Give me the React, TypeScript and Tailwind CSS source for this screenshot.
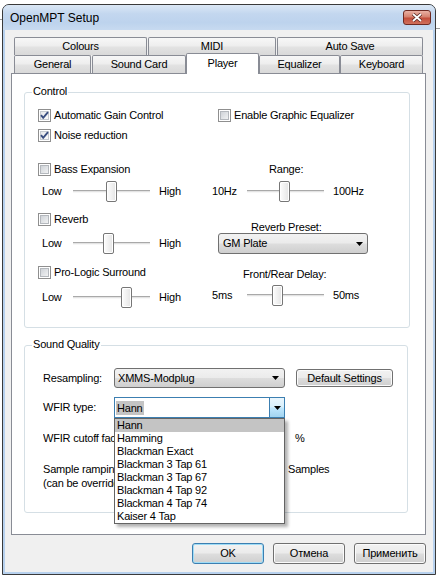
import React from "react";

const BTN_BG =
  "bg-[linear-gradient(to_bottom,#f2f2f2_0%,#ebebeb_48%,#dddddd_52%,#cfcfcf_100%)]";
const TAB_BG =
  "bg-[linear-gradient(to_bottom,#f7f7f7_0%,#eeeeee_45%,#e2e2e2_55%,#d9d9d9_100%)]";

const WFIR_TYPES = [
  "Hann",
  "Hamming",
  "Blackman Exact",
  "Blackman 3 Tap 61",
  "Blackman 3 Tap 67",
  "Blackman 4 Tap 92",
  "Blackman 4 Tap 74",
  "Kaiser 4 Tap",
];

function Arrow() {
  return (
    <svg width="7" height="4" viewBox="0 0 7 4">
      <path d="M0 0h7L3.5 4z" fill="#000" />
    </svg>
  );
}

function Tab({ label, className }: { label: string; className: string }) {
  return (
    <div
      className={`flex h-[18px] items-center justify-center rounded-t-[2px] border border-b-0 border-[#898c95] ${TAB_BG} ${className}`}
    >
      {label}
    </div>
  );
}

function CheckBox({
  label,
  checked = false,
  className = "",
}: {
  label: string;
  checked?: boolean;
  className?: string;
}) {
  return (
    <div className={`flex h-[13px] items-center ${className}`}>
      <span className="relative h-[13px] w-[13px] shrink-0 border border-[#8f8f8f] bg-white p-[1px]">
        <span
          className={
            checked
              ? "block h-full w-full border border-[#c5cad0] bg-[linear-gradient(135deg,#e4e7ea,#fbfbfb)]"
              : "block h-full w-full border border-[#b4b8bd] bg-[linear-gradient(135deg,#cfd3d8,#f1f2f3)]"
          }
        />
        {checked ? (
          <svg
            viewBox="0 0 11 11"
            className="absolute left-0 top-0 h-[11px] w-[11px]"
          >
            <path
              d="M2 5.2l2.2 2.6L9 2.2"
              fill="none"
              stroke="#394e80"
              strokeWidth="1.9"
            />
          </svg>
        ) : null}
      </span>
      <span className="ml-[3px] whitespace-nowrap leading-[13px]">{label}</span>
    </div>
  );
}

function Slider({
  lo,
  hi,
  loWidth,
  thumb,
  className = "",
}: {
  lo: string;
  hi: string;
  loWidth: string;
  thumb: string;
  className?: string;
}) {
  return (
    <div className={`flex h-[21px] items-center ${className}`}>
      <span className={loWidth}>{lo}</span>
      <div className="relative h-[21px] w-[77px]">
        <div className="absolute inset-x-0 top-[9px] h-[3px] border-t border-b border-t-[#a9a9a9] border-b-[#f7f7f7] bg-[#e3e3e3]" />
        <div
          className={`absolute top-0 h-[21px] w-[11px] rounded-[2px] border border-[#767676] bg-[linear-gradient(to_right,#fdfdfd,#e4e4e4)] shadow-[inset_0_0_0_1px_#ffffff] ${thumb}`}
        />
      </div>
      <span className="ml-[9px]">{hi}</span>
    </div>
  );
}

function Combo({ text, className }: { text: string; className: string }) {
  return (
    <div
      className={`flex items-center justify-between rounded-[3px] border border-[#707070] ${BTN_BG} ${className}`}
    >
      <span className="whitespace-nowrap">{text}</span>
      <Arrow />
    </div>
  );
}

function Button({ label, focused = false }: { label: string; focused?: boolean }) {
  return (
    <div
      className={
        focused
          ? `flex h-[21px] w-[72px] items-center justify-center rounded-[3px] border border-[#3c7fb1] shadow-[inset_0_0_0_1px_#9fdcf6] ${BTN_BG}`
          : `flex h-[21px] w-[72px] items-center justify-center rounded-[3px] border border-[#707070] shadow-[inset_0_0_0_1px_#fbfbfb] ${BTN_BG}`
      }
    >
      {label}
    </div>
  );
}

export default function App() {
  return (
    <div className="relative h-[578px] w-[440px] overflow-hidden bg-white pl-[2px] pt-[4px] font-['Liberation_Sans',Arial,sans-serif] text-[11px] tracking-[-0.2px] text-black">
      {/* bits of the window behind */}
      <div className="absolute left-0 top-[19px] h-px w-[3px] bg-[#9a9a9a]" />
      <div className="absolute right-0 top-[28px] h-px w-[5px] bg-[#9a9a9a]" />

      <div className="relative flex h-[571px] w-[434px] flex-col rounded-t-[7px] border border-[#3a3a3a] bg-[#b7d1ee]">
        {/* title bar */}
        <div className="flex h-[25px] items-center justify-between rounded-t-[6px] bg-[linear-gradient(to_bottom,#dbe7f5_0%,#c3d7ef_35%,#bdd3ed_70%,#c7daf0_100%)] pl-[7px] pr-[4px]">
          <span className="text-[12px] tracking-normal">OpenMPT Setup</span>
          <div className="flex h-[15px] w-[28px] items-center justify-center rounded-[3px] border border-[#6e2a22] bg-[linear-gradient(to_bottom,#eab1a4_0%,#d6826f_45%,#c34e3b_55%,#d0705c_100%)]">
            <svg width="12" height="9" viewBox="0 0 12 9">
              <path d="M2 1l8 7M10 1L2 8" stroke="#5a2a25" strokeWidth="3.4" />
              <path d="M2 1l8 7M10 1L2 8" stroke="#ffffff" strokeWidth="1.8" />
            </svg>
          </div>
        </div>

        {/* client area */}
        <div className="mx-[2px] mb-[2px] flex-1 bg-[#f0f0f0] pt-[7px]">
          <div className="ml-[6px] w-[415px]">
            <div className="flex h-[18px] pl-[3px]">
              <Tab label="Colours" className="w-[133px]" />
              <Tab label="MIDI" className="ml-[1px] w-[128px]" />
              <Tab label="Auto Save" className="ml-[1px] w-[146px]" />
            </div>
            <div className="flex h-[18px] items-end pl-[3px]">
              <Tab label="General" className="w-[77px]" />
              <Tab label="Sound Card" className="ml-[1px] w-[94px]" />
              <div className="relative z-10 -mb-px flex h-[21px] w-[73px] items-center justify-center rounded-t-[2px] border border-b-0 border-[#898c95] bg-white pb-[1px]">
                Player
              </div>
              <Tab label="Equalizer" className="w-[81px]" />
              <Tab label="Keyboard" className="w-[83px]" />
            </div>

            {/* page */}
            <div className="h-[462px] border border-[#898c95] bg-white pl-[12px] pt-[18px]">
              {/* Control */}
              <div className="relative h-[236px] w-[386px] rounded-[3px] border border-[#d5dfe5]">
                <span className="absolute -top-[8px] left-[7px] bg-white px-[1px] leading-[13px]">
                  Control
                </span>
                <div className="flex">
                  <div className="ml-[13px] flex w-[174px] flex-col">
                    <CheckBox className="mt-[16px]" checked label="Automatic Gain Control" />
                    <CheckBox className="mt-[7px]" checked label="Noise reduction" />
                    <CheckBox className="mt-[21px]" label="Bass Expansion" />
                    <Slider className="ml-[4px] mt-[5px]" lo="Low" hi="High" loWidth="w-[31px]" thumb="left-[33px]" />
                    <CheckBox className="mt-[11px]" label="Reverb" />
                    <Slider className="ml-[4px] mt-[7px]" lo="Low" hi="High" loWidth="w-[31px]" thumb="left-[30px]" />
                    <CheckBox className="mt-[12px]" label="Pro-Logic Surround" />
                    <Slider className="ml-[4px] mt-[8px]" lo="Low" hi="High" loWidth="w-[31px]" thumb="left-[48px]" />
                  </div>
                  <div className="flex flex-col">
                    <CheckBox className="ml-[6px] mt-[16px]" label="Enable Graphic Equalizer" />
                    <span className="ml-[57px] mt-[41px] leading-[13px]">Range:</span>
                    <Slider className="mt-[5px]" lo="10Hz" hi="100Hz" loWidth="w-[35px]" thumb="left-[32px]" />
                    <span className="ml-[39px] mt-[20px] h-[11px] leading-[11px]">Reverb Preset:</span>
                    <Combo text="GM Plate" className="ml-[6px] h-[21px] w-[150px] pl-[4px] pr-[4px]" />
                    <span className="ml-[31px] mt-[15px] h-[11px] leading-[11px]">Front/Rear Delay:</span>
                    <Slider className="mt-[5px]" lo="5ms" hi="50ms" loWidth="w-[35px]" thumb="left-[25px]" />
                  </div>
                </div>
              </div>

              {/* Sound Quality */}
              <div className="relative mt-[17px] h-[168px] w-[384px] rounded-[3px] border border-[#d5dfe5] pl-[18px]">
                <span className="absolute -top-[8px] left-[7px] bg-white px-[1px] leading-[13px]">
                  Sound Quality
                </span>

                <div className="mt-[22px] flex h-[20px] items-center">
                  <span className="w-[71px]">Resampling:</span>
                  <Combo text="XMMS-Modplug" className="h-[20px] w-[171px] pl-[3px] pr-[5px]" />
                  <div
                    className={`ml-[11px] flex h-[18px] w-[97px] items-center justify-center rounded-[3px] border border-[#707070] shadow-[inset_0_0_0_1px_#fbfbfb] ${BTN_BG}`}
                  >
                    Default Settings
                  </div>
                </div>

                <div className="mt-[9px] flex h-[21px] items-center">
                  <span className="w-[71px]">WFIR type:</span>
                  <div className="relative h-[21px] w-[171px]">
                    <div className="flex h-full items-center border border-[#3c7fb1] bg-white pl-[1px]">
                      <span className="bg-[#c4c4c4] px-px leading-[14px]">Hann</span>
                    </div>
                    <div className="absolute right-0 top-0 flex h-[21px] w-[16px] items-center justify-center border border-[#3c7fb1] bg-[linear-gradient(to_bottom,#eaf6fd_0%,#d9f0fc_45%,#bee6fd_55%,#a2d4f0_100%)]">
                      <Arrow />
                    </div>
                    <div className="absolute left-0 top-full z-20 w-[171px] border border-[#646464] bg-white shadow-[3px_3px_3px_rgba(0,0,0,0.3)]">
                      {WFIR_TYPES.map((name, i) => (
                        <div
                          key={name}
                          className={
                            i === 0
                              ? "h-[13px] bg-[#c4c4c4] pl-[2px] leading-[13px]"
                              : "h-[13px] pl-[2px] leading-[13px]"
                          }
                        >
                          {name}
                        </div>
                      ))}
                    </div>
                  </div>
                </div>

                {/* labels are cut off where the open list covers them */}
                <div className="mt-[14px] flex h-[13px] items-center leading-[13px]">
                  <span className="w-[71px] overflow-hidden whitespace-nowrap">WFIR cutoff factor:</span>
                  <span className="ml-[181px]">%</span>
                </div>

                <div className="mt-[17px] flex leading-[14px]">
                  <div className="w-[71px] overflow-hidden whitespace-nowrap">
                    <div>Sample ramping:</div>
                    <div>(can be overridden)</div>
                  </div>
                  <span className="ml-[174px]">Samples</span>
                </div>
              </div>
            </div>

            <div className="mt-[8px] flex justify-end gap-[9px]">
              <Button label="OK" focused />
              <Button label="Отмена" />
              <Button label="Применить" />
            </div>
          </div>
        </div>
      </div>
    </div>
  );
}
